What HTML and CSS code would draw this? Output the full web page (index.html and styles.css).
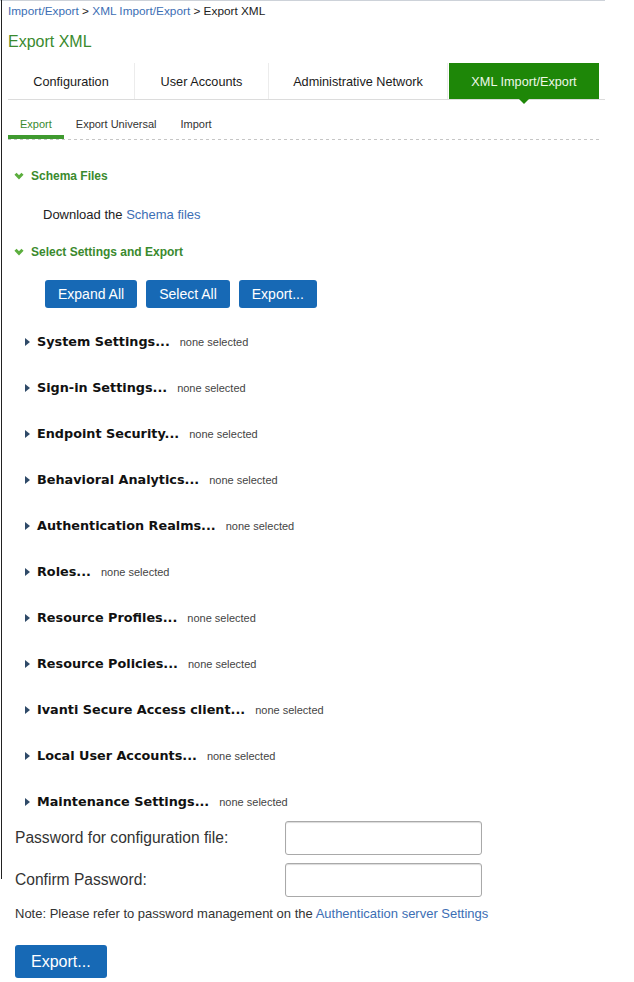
FILE: index.html
```html
<!DOCTYPE html>
<html>
<head>
  <title>Export XML</title>
  <link rel="stylesheet" href="styles.css">
</head>
<body>
  <div class="page">
    <div class="crumbs">
      <a href="#">Import/Export</a> &gt; <a href="#">XML Import/Export</a> &gt; Export XML
    </div>
    <h1 class="title">Export XML</h1>

    <div class="tabs">
      <div class="tab" style="width:127px">Configuration</div>
      <div class="tab" style="width:134px">User Accounts</div>
      <div class="tab" style="width:179px">Administrative Network</div>
      <div class="tab active" style="width:150px">XML Import/Export</div>
    </div>

    <div class="subtabs">
      <div class="subtab active">Export</div>
      <div class="subtab">Export Universal</div>
      <div class="subtab">Import</div>
    </div>

    <div class="section-head first">
      <svg class="chev" width="10" height="8" viewBox="0 0 10 8"><polyline points="1.5,1.8 5,5.3 8.5,1.8" fill="none" stroke="#5cae3e" stroke-width="3"/></svg>
      Schema Files
    </div>
    <div class="download">Download the <a href="#">Schema files</a></div>

    <div class="section-head">
      <svg class="chev" width="10" height="8" viewBox="0 0 10 8"><polyline points="1.5,1.8 5,5.3 8.5,1.8" fill="none" stroke="#5cae3e" stroke-width="3"/></svg>
      Select Settings and Export
    </div>

    <div class="buttons">
      <button class="btn">Expand All</button>
      <button class="btn">Select All</button>
      <button class="btn">Export...</button>
    </div>

    <div class="settings">
      <div class="item"><span class="tri"></span><b>System Settings...</b><span class="sel">none selected</span></div>
      <div class="item"><span class="tri"></span><b>Sign-in Settings...</b><span class="sel">none selected</span></div>
      <div class="item"><span class="tri"></span><b>Endpoint Security...</b><span class="sel">none selected</span></div>
      <div class="item"><span class="tri"></span><b>Behavioral Analytics...</b><span class="sel">none selected</span></div>
      <div class="item"><span class="tri"></span><b>Authentication Realms...</b><span class="sel">none selected</span></div>
      <div class="item"><span class="tri"></span><b>Roles...</b><span class="sel">none selected</span></div>
      <div class="item"><span class="tri"></span><b>Resource Profiles...</b><span class="sel">none selected</span></div>
      <div class="item"><span class="tri"></span><b>Resource Policies...</b><span class="sel">none selected</span></div>
      <div class="item"><span class="tri"></span><b>Ivanti Secure Access client...</b><span class="sel">none selected</span></div>
      <div class="item"><span class="tri"></span><b>Local User Accounts...</b><span class="sel">none selected</span></div>
      <div class="item"><span class="tri"></span><b>Maintenance Settings...</b><span class="sel">none selected</span></div>
    </div>

    <div class="pw">
      <div class="pw-row">
        <label>Password for configuration file:</label>
        <input type="password" class="field">
      </div>
      <div class="pw-row">
        <label>Confirm Password:</label>
        <input type="password" class="field">
      </div>
      <div class="note">Note: Please refer to password management on the <a href="#">Authentication server Settings</a></div>
      <button class="btn big">Export...</button>
    </div>
  </div>
</body>
</html>
```

FILE: styles.css
```css
body {
  margin: 0;
  background: #fff;
  font-family: "Liberation Sans", Arial, sans-serif;
  color: #222;
}
a {
  color: #3c6eb4;
  text-decoration: none;
}
.page {
  position: relative;
  width: 605px;
  box-sizing: border-box;
  padding-left: 8px;
  border-top: 1px solid #cdd2d9;
}
/* left frame edge */
.page::before {
  content: "";
  position: absolute;
  left: 1px;
  top: -1px;
  width: 1px;
  height: 879px;
  background: #222;
}
.crumbs {
  font-size: 11.8px;
  line-height: 14px;
  padding-top: 3px;
  color: #222;
}
.title {
  margin: 14px 0 0;
  font-size: 16px;
  line-height: 20px;
  font-weight: normal;
  color: #3a8a2e;
}
.tabs {
  display: flex;
  margin-top: 11px;
  height: 36px;
  border-bottom: 1px solid #dcdcdc;
}
.tab {
  position: relative;
  box-sizing: border-box;
  text-align: center;
  font-size: 12.7px;
  line-height: 38px;
  color: #1a1a1a;
  border-right: 1px solid #ececec;
}
.tab.active {
  background: #1e8708;
  color: #eef8e8;
  border-right: none;
  margin-left: 1px;
}
.tab.active::after {
  content: "";
  position: absolute;
  left: 50%;
  top: 100%;
  margin-left: -5px;
  border-left: 5px solid transparent;
  border-right: 5px solid transparent;
  border-top: 5px solid #1e8708;
}
.subtabs {
  display: flex;
  width: 594px;
  margin-top: 17px;
  padding-bottom: 1px;
  background: linear-gradient(to right, #c6c6c6 3px, transparent 3px) 0 100% / 6px 1px repeat-x;
}
.subtab {
  font-size: 11px;
  line-height: 14px;
  padding: 0 12px 4px;
  border-bottom: 4px solid transparent;
  color: #333;
}
.subtab.active {
  color: #3a8a2e;
  border-bottom-color: #3f9a2f;
}
.section-head {
  display: flex;
  align-items: center;
  margin-top: 21px;
  padding-left: 6px;
  font-size: 12px;
  line-height: 16px;
  font-weight: bold;
  color: #3a8a2e;
}
.section-head.first {
  margin-top: 28px;
}
.chev {
  margin-right: 7px;
}
.download {
  margin-top: 23px;
  padding-left: 35px;
  font-size: 13px;
  line-height: 16px;
  color: #222;
}
.buttons {
  display: flex;
  gap: 9px;
  margin-top: 20px;
  padding-left: 37px;
}
.btn {
  font-family: "Liberation Sans", Arial, sans-serif;
  font-size: 14px;
  height: 28px;
  padding: 0 13px;
  border: none;
  border-radius: 3px;
  background: #1769b5;
  color: #fff;
}
.settings {
  display: flex;
  flex-direction: column;
  gap: 28px;
  margin-top: 25px;
  padding-left: 17px;
}
.item {
  display: flex;
  align-items: center;
  line-height: 18px;
}
.tri {
  width: 0;
  height: 0;
  border-top: 4px solid transparent;
  border-bottom: 4px solid transparent;
  border-left: 5px solid #2f4a68;
  margin-right: 7px;
}
.item b {
  font-family: "DejaVu Sans", Verdana, sans-serif;
  font-size: 12.8px;
  color: #111;
}
.sel {
  margin-left: 10px;
  font-size: 11px;
  color: #444;
}
.pw {
  margin-top: 10px;
  padding-left: 7px;
}
.pw-row {
  display: grid;
  grid-template-columns: 270px 197px;
  align-items: center;
  margin-bottom: 8px;
}
.pw-row label {
  font-size: 15.6px;
  color: #333;
}
.field {
  box-sizing: border-box;
  height: 34px;
  border: 1px solid #a9a9a9;
  border-radius: 3px;
  box-shadow: inset 0 1px 1px rgba(0, 0, 0, 0.15);
}
.note {
  margin-top: 9px;
  font-size: 13px;
  line-height: 15px;
  color: #333;
}
.btn.big {
  margin-top: 24px;
  height: 33px;
  padding: 0 16px;
  font-size: 16px;
}
```
